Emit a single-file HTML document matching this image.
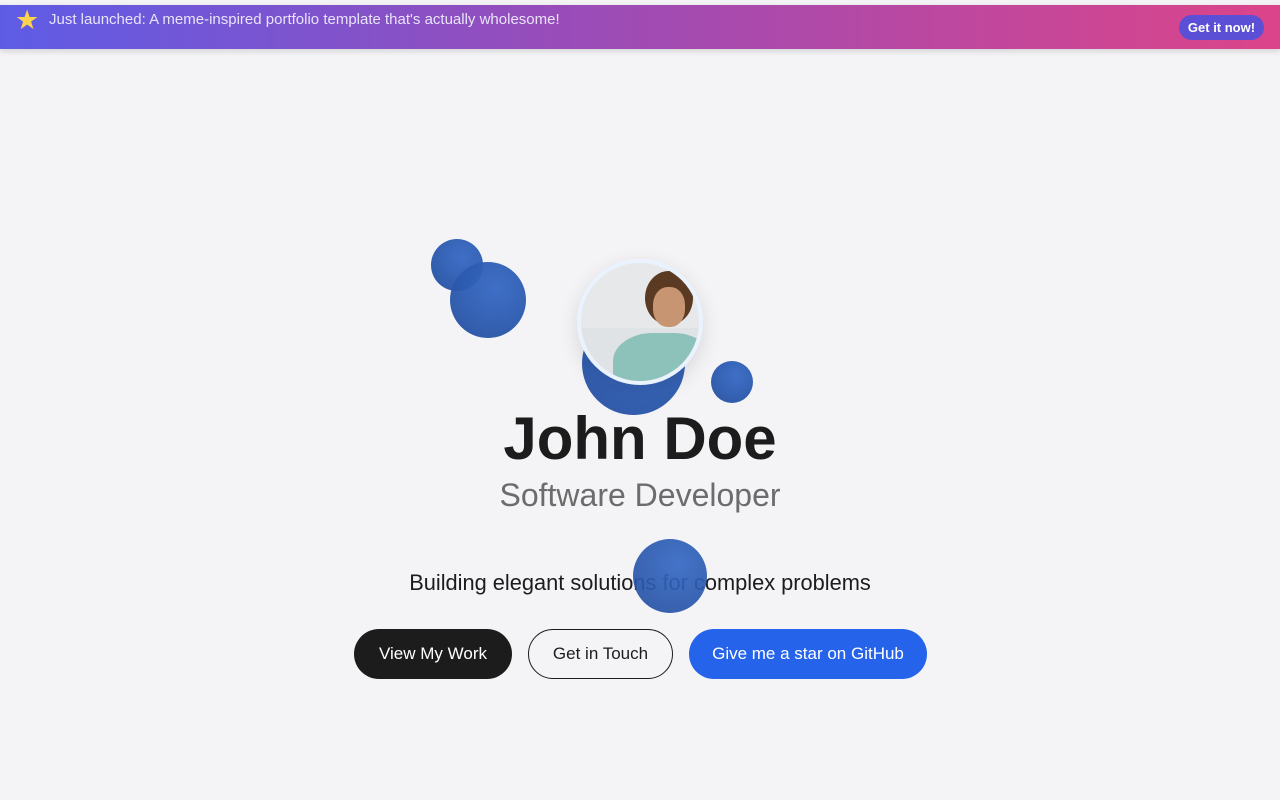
<!DOCTYPE html>
<html><head><meta charset="utf-8"><style>
*{margin:0;padding:0;box-sizing:border-box}
body{width:1280px;height:800px;background:#f4f4f7;font-family:"Liberation Sans",sans-serif;position:relative;overflow:hidden}
.ban{position:absolute;left:0;top:5px;width:1280px;height:44px;background:linear-gradient(90deg,#5e5ce6,#9a4cb8 45%,#dc4489);box-shadow:0 2px 6px rgba(0,0,0,.15)}
.ban .s{position:absolute;left:15px;top:0px;font-size:27px;color:#fcd34d}
.ban .t{position:absolute;left:49px;top:6px;font-size:15px;color:#e8e4f7}
.ban .b{position:absolute;left:1179px;top:10px;width:85px;height:25px;border-radius:13px;background:#5b4fd6;color:#fff;font-weight:bold;font-size:13px;text-align:center;line-height:25px}
.c{position:absolute;border-radius:50%;background:radial-gradient(circle at 60% 35%,#3568c4,#2a58ad 60%,#234c9a);opacity:.95}
.av{position:absolute;left:577px;top:259px;width:126px;height:126px;border-radius:50%;border:4px solid #eaf2fd;background:linear-gradient(180deg,#e6e8ea 0 55%,#e0e3e5 55%);box-shadow:0 6px 20px rgba(0,0,0,.12);overflow:hidden}
.av .h{position:absolute;left:64px;top:8px;width:48px;height:54px;border-radius:50%;background:#5a3a22}
.av .f{position:absolute;left:72px;top:24px;width:32px;height:40px;border-radius:45%;background:#c89572}
.av .sh{position:absolute;left:32px;top:70px;width:100px;height:70px;border-radius:40% 40% 0 0;background:#8cc2b9}
h1{position:absolute;left:0;width:1280px;top:404px;text-align:center;font-size:60px;font-weight:bold;color:#1c1c1c}
.sub{position:absolute;left:0;width:1280px;top:477px;text-align:center;font-size:32px;color:#6c6c6c}
.tag{position:absolute;left:0;width:1280px;top:570px;text-align:center;font-size:21.8px;color:#1c1c1c}
.btn{position:absolute;top:629px;height:50px;border-radius:25px;font-size:17px;text-align:center;line-height:50px}
</style></head><body>
<div class="ban"><span class="s">★</span><span class="t">Just launched: A meme-inspired portfolio template that's actually wholesome!</span><span class="b">Get it now!</span></div>
<div class="c" style="left:431px;top:239px;width:52px;height:52px"></div>
<div class="c" style="left:450px;top:262px;width:76px;height:76px"></div>
<div class="c" style="left:582px;top:312px;width:103px;height:103px"></div>
<div class="c" style="left:711px;top:361px;width:42px;height:42px"></div>
<div class="av"><div class="sh"></div><div class="h"></div><div class="f"></div></div>
<h1>John Doe</h1>
<div class="sub">Software Developer</div>
<div class="tag">Building elegant solutions for complex problems</div>
<div class="c" style="left:633px;top:539px;width:74px;height:74px;opacity:.92"></div>
<div class="btn" style="left:354px;width:158px;background:#1c1c1c;color:#fff">View My Work</div>
<div class="btn" style="left:528px;width:145px;border:1px solid #1c1c1c;color:#1c1c1c;line-height:48px">Get in Touch</div>
<div class="btn" style="left:689px;width:238px;background:#2563eb;color:#fff">Give me a star on GitHub</div>
</body></html>
